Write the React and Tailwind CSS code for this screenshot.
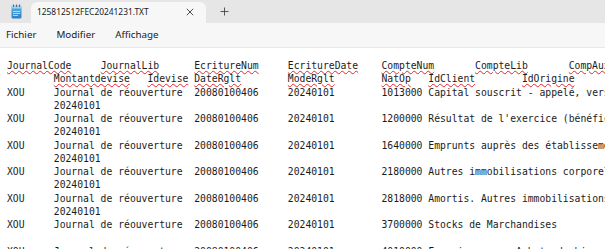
import React from 'react';

const squiggle = 'underline decoration-wavy decoration-[#e3262b] decoration-1 underline-offset-[1px]';

const headerTop = ['JournalCode', 'JournalLib', 'EcritureNum', 'EcritureDate', 'CompteNum', 'CompteLib', 'CompAuxNum'];
const headerWrap = ['Montantdevise', 'Idevise', 'DateRglt', 'ModeRglt', 'NatOp', 'IdClient', 'IdOrigine'];

const rows = [
    { num: '1013000', lib: 'Capital souscrit - appelé, versé', date: '20240101' },
    { num: '1200000', lib: "Résultat de l'exercice (bénéfice)", date: '20240101' },
    { num: '1640000', lib: 'Emprunts auprès des établissements de crédit', date: '20240101' },
    { num: '2180000', lib: 'Autres immobilisations corporelles', date: '20240101' },
    { num: '2818000', lib: 'Amortis. Autres immobilisations corporelles', date: '20240101' },
    { num: '3700000', lib: 'Stocks de Marchandises', date: '' },
    { num: '4010000', lib: 'Fournisseurs - Achats de biens et prestations', date: '20240101' },
];

function Underlined({ words, lead }) {
    return (
        <div>
            {lead}
            {words.map((w, i) => (
                <React.Fragment key={i}>
                    {i > 0 && '\t'}
                    <span className={squiggle}>{w}</span>
                </React.Fragment>
            ))}
        </div>
    );
}

function NotepadIcon() {
    return (
        <svg width="11" height="15" viewBox="0 0 11 15">
            <defs>
                <linearGradient id="np" x1="0" y1="0" x2="0" y2="1">
                    <stop offset="0" stopColor="#5fb3ea" />
                    <stop offset="1" stopColor="#2a7fc6" />
                </linearGradient>
            </defs>
            <rect x="0.5" y="1.5" width="10" height="13" rx="1.5" fill="url(#np)" />
            <rect x="0.5" y="1.5" width="10" height="3" rx="1.2" fill="#9fd0f2" />
            <path d="M2.5 0.5v2.5M5.5 0.5v2.5M8.5 0.5v2.5" stroke="#5a6b7a" strokeWidth="1" />
            <path d="M2 7.5h7M2 9.5h7M2 11.5h5" stroke="#cfe8fa" strokeWidth="0.8" />
        </svg>
    );
}

export default function App() {
    return (
        <div className="w-[605px] h-[249px] overflow-hidden bg-white flex flex-col">
            <div className="h-[23px] bg-[#e6e6e6] flex items-end shrink-0">
                <div className="w-[31px] h-full flex items-center justify-center pl-[1px]">
                    <NotepadIcon />
                </div>
                <div className="w-[175px] h-[21px] bg-[#f7f7f7] rounded-t-[6px] flex items-center pl-[6px] pr-[12px] font-['Noto_Sans',sans-serif] text-[8.4px] text-[#1a1a1a]">
                    <span className="flex-1 truncate">125812512FEC20241231.TXT</span>
                    <svg width="8" height="8" viewBox="0 0 8 8" className="mb-[1px]">
                        <path d="M0.8 0.8l6.4 6.4M7.2 0.8l-6.4 6.4" stroke="#3a3a3a" strokeWidth="0.9" />
                    </svg>
                </div>
                <div className="w-[36px] h-full flex items-center justify-center">
                    <svg width="9" height="9" viewBox="0 0 9 9">
                        <path d="M4.5 0.5v8M0.5 4.5h8" stroke="#444" strokeWidth="0.9" />
                    </svg>
                </div>
            </div>
            <div className="h-[25px] bg-[#f7f7f7] border-b border-[#e9e9e9] flex items-center gap-[20px] px-[6px] font-['Noto_Sans',sans-serif] text-[9.8px] text-[#1b1b1b] shrink-0">
                <span>Fichier</span>
                <span>Modifier</span>
                <span>Affichage</span>
            </div>
            <div className="pt-[11px] pl-[7px] whitespace-pre font-['DejaVu_Sans_Mono',monospace] text-[9.73px] leading-[13.27px] text-[#1b1b1b] [tab-size:8]">
                <Underlined words={headerTop} />
                <Underlined words={headerWrap} lead={'\t'} />
                {rows.map((r, i) => (
                    <React.Fragment key={i}>
                        <div>{`XOU\tJournal de réouverture\t20080100406\t20240101\t${r.num}\t${r.lib}`}</div>
                        <div>{r.date ? `\t${r.date}` : '\u00a0'}</div>
                    </React.Fragment>
                ))}
            </div>
        </div>
    );
}
